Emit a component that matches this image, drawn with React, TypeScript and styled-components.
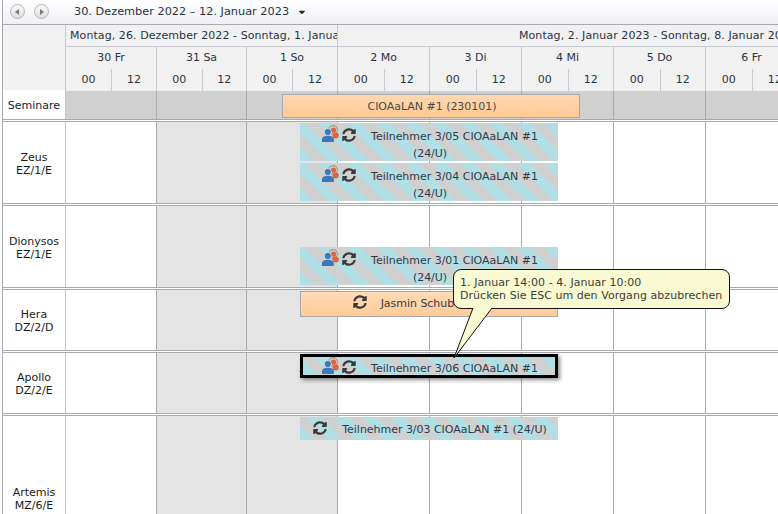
import React from "react";
import styled, { createGlobalStyle, css } from "styled-components";
import { FaSyncAlt, FaCaretDown } from "react-icons/fa";

const Global = createGlobalStyle`
  html, body { margin: 0; padding: 0; background: #fff; overflow: hidden; height: 514px; }
  #root { height: 514px; overflow: hidden; }
  * { box-sizing: border-box; }
`;

const DAY_WIDTHS = [91, 90, 91, 92, 92, 92, 92, 92, 92, 92];
const TRACKS = DAY_WIDTHS.map((w) => `${w}px`).join(" ");
const FONT = `"DejaVu Sans", Verdana, sans-serif`;
const LINE = "#a9a9b1";
const HEAD_LINE = "#c9c9d1";

const Page = styled.div`
  position: relative;
  width: 1100px;
  height: 514px;
  margin-left: 2px;
  border-left: 1px solid ${LINE};
  font: 11px/14px ${FONT};
  color: #2a3340;
`;
const Toolbar = styled.div`
  display: flex;
  align-items: center;
  height: 25px;
  width: 775px;
  padding: 0 0 1px 7px;
  background: linear-gradient(#ffffff, #eef0f5);
  border-bottom: 1px solid ${LINE};
`;
const NavButton = styled.button<{ $flip?: boolean }>`
  display: flex;
  align-items: center;
  justify-content: center;
  width: 15px;
  height: 15px;
  padding: 0;
  margin-right: 9px;
  border: 1px solid #b4b4b4;
  border-radius: 50%;
  background: linear-gradient(#fbfbfb, #dedede);
  &::before {
    content: "";
    width: 0;
    height: 0;
    border-top: 3px solid transparent;
    border-bottom: 3px solid transparent;
    ${(p) => (p.$flip ? "border-left: 4px solid #777; margin-left: 1px;" : "border-right: 4px solid #777; margin-right: 1px;")}
  }
`;
const RangeButton = styled.div`
  display: flex;
  align-items: center;
  margin-left: 16px;
  font-size: 11.3px;
  color: #2a3340;
  svg { margin-left: 8px; font-size: 10px; color: #222; }
`;
const Row = styled.div<{ $h: number }>`
  display: flex;
  height: ${(p) => p.$h}px;
`;
const Corner = styled.div`
  width: 62px;
  height: 65px;
  flex: none;
  background: #f1f1f1;
`;
const HeaderStack = styled.div`
  display: flex;
  flex-direction: column;
`;
const HeaderGrid = styled.div`
  display: grid;
  grid-template-columns: ${TRACKS};
  height: 22px;
  background: #f1f1f1;
`;
const WeekCell = styled.div<{ $span: number; $pr: number }>`
  grid-column: span ${(p) => p.$span};
  padding: 0 ${(p) => p.$pr}px 0 4px;
  border-left: 1px solid ${HEAD_LINE};
  border-bottom: 1px solid ${HEAD_LINE};
  line-height: 21px;
  letter-spacing: 0.08px;
  white-space: nowrap;
  overflow: hidden;
  display: flex;
  justify-content: safe center;
`;
const DayCell = styled.div`
  border-left: 1px solid ${HEAD_LINE};
  border-bottom: 1px solid ${HEAD_LINE};
  line-height: 22px;
  text-align: center;
`;
const HourPair = styled.div`
  display: grid;
  grid-template-columns: 1fr 1fr;
  border-left: 1px solid ${HEAD_LINE};
`;
const HourCell = styled.div`
  line-height: 22px;
  text-align: center;
  & + & { border-left: 1px solid ${HEAD_LINE}; }
`;
const Resource = styled.div<{ $h: number }>`
  display: flex;
  height: ${(p) => p.$h}px;
  border-bottom: 3px double ${LINE};
`;
const Label = styled.div<{ $pt?: number }>`
  flex: none;
  width: 62px;
  padding-top: ${(p) => p.$pt ?? 2}px;
  display: flex;
  align-items: center;
  justify-content: center;
  text-align: center;
  line-height: 13px;
  color: #1a1a22;
  background: #fff;
`;
const Lane = styled.div`
  position: relative;
  display: grid;
  grid-template-columns: ${TRACKS};
`;
const LaneCell = styled.div<{ $bg: string; $first?: boolean }>`
  background: ${(p) => p.$bg};
  border-left: 1px solid ${(p) => (p.$first ? "#c6c6c6" : "#ababab")};
`;
const stripes = css`
  background: repeating-linear-gradient(45deg, #b0e0e6 0 10px, #d0d0d0 10px 20px);
`;
const Event = styled.div<{ $x: number; $y: number; $h: number; $pt: number; $kind: "stripe" | "orange" | "selected" | "seminar"; $w?: number }>`
  position: absolute;
  left: ${(p) => p.$x}px;
  top: ${(p) => p.$y}px;
  width: ${(p) => p.$w ?? 258}px;
  height: ${(p) => p.$h}px;
  text-align: center;
  line-height: 17px;
  letter-spacing: -0.03px;
  color: #333a46;
  padding: ${(p) => p.$pt}px 7px 0 9px;
  ${(p) => (p.$kind === "stripe" || p.$kind === "selected") && stripes}
  ${(p) => p.$kind === "selected" && css`
    border: 3px solid #000;
    line-height: 13px;
    padding-left: 6px;
    padding-right: 4px;
    box-shadow: 2px 2px 4px rgba(0,0,0,.45);
  `}
  ${(p) => (p.$kind === "orange" || p.$kind === "seminar") && css`
    background: linear-gradient(#ffdcb8, #ffca96);
    border: 1px solid #a6a6ae;
  `}
  ${(p) => p.$kind === "seminar" && css`
    background: linear-gradient(#ffd9b3, #ffc992);
    color: #4a4a4a;
  `}
`;
const IconSlot = styled.span<{ $mr: number }>`
  display: inline-flex;
  vertical-align: -2px;
  margin-right: ${(p) => p.$mr}px;
`;
const SyncIcon = styled(FaSyncAlt)`
  width: 14px;
  height: 14px;
  color: #3a3a3a;
`;
const Tooltip = styled.div`
  position: absolute;
  left: 450px;
  top: 269px;
  width: 277px;
  height: 40px;
  padding: 6px 0 0 6px;
  background: #f9f9d2;
  border: 1px solid #111;
  border-radius: 8px;
  line-height: 13px;
  letter-spacing: 0.05px;
  color: #3c4038;
  white-space: nowrap;
  z-index: 3;
`;
const TooltipTail = styled.svg`
  position: absolute;
  left: 449px;
  top: 307px;
  z-index: 4;
`;

const PeopleIcon = () => (
  <svg width="17" height="17" viewBox="0 0 17 17">
    <circle cx="11" cy="5" r="4.4" fill="none" stroke="#e6805f" strokeWidth="1.1" />
    <circle cx="11.5" cy="5.2" r="2.6" fill="#e2623c" />
    <ellipse cx="13.6" cy="10.6" rx="3.2" ry="3" fill="#e2623c" />
    <circle cx="5.8" cy="7" r="3.6" fill="#3b78b8" stroke="#fff" strokeWidth=".6" />
    <path d="M0 17v-2.6C0 12 2.5 10.8 5.8 10.8s6 1.2 6 3.6V17z" fill="#3b78b8" />
  </svg>
);

const Sync = ({ mr }: { mr: number }) => (
  <IconSlot $mr={mr}><SyncIcon /></IconSlot>
);

const People = () => (
  <IconSlot $mr={3}><PeopleIcon /></IconSlot>
);

const DAYS = ["30 Fr", "31 Sa", "1 So", "2 Mo", "3 Di", "4 Mi", "5 Do", "6 Fr", "7 Sa", "8 So"];
const WEEKEND_IDX = [1, 2, 8, 9];

const Cells = ({ seminar }: { seminar?: boolean }) => (
  <>
    {DAY_WIDTHS.map((_, i) => (
      <LaneCell
        key={i}
        $first={i === 0}
        $bg={seminar ? "#d0d0d0" : WEEKEND_IDX.includes(i) ? "#e4e4e4" : "#fff"}
      />
    ))}
  </>
);

const X = 235;

export default function App() {
  return (
    <>
      <Global />
      <Page>
        <Toolbar>
          <NavButton aria-label="Zurück" />
          <NavButton aria-label="Weiter" $flip />
          <RangeButton>
            30. Dezember 2022 – 12. Januar 2023
            <FaCaretDown />
          </RangeButton>
        </Toolbar>

        <Row $h={66}>
          <Corner />
          <HeaderStack>
            <HeaderGrid>
              <WeekCell $span={3} $pr={3}>Montag, 26. Dezember 2022 - Sonntag, 1. Januar 2023</WeekCell>
              <WeekCell $span={7} $pr={8}>Montag, 2. Januar 2023 - Sonntag, 8. Januar 2023</WeekCell>
            </HeaderGrid>
            <HeaderGrid>
              {DAYS.map((d) => <DayCell key={d}>{d}</DayCell>)}
            </HeaderGrid>
            <HeaderGrid>
              {DAYS.map((d) => (
                <HourPair key={d}>
                  <HourCell>00</HourCell>
                  <HourCell>12</HourCell>
                </HourPair>
              ))}
            </HeaderGrid>
          </HeaderStack>
        </Row>

        <Resource $h={31}>
          <Label $pt={1}>Seminare</Label>
          <Lane>
            <Cells seminar />
            <Event $kind="seminar" $x={217} $y={3} $h={24} $w={298} $pt={3}>CIOAaLAN #1 (230101)</Event>
          </Lane>
        </Resource>

        <Resource $h={84}>
          <Label>Zeus<br />EZ/1/E</Label>
          <Lane>
            <Cells />
            <Event $kind="stripe" $x={X} $y={1} $h={38} $pt={2}>
              <People /><Sync mr={15} />Teilnehmer 3/05 CIOAaLAN #1 (24/U)
            </Event>
            <Event $kind="stripe" $x={X} $y={41} $h={38} $pt={2}>
              <People /><Sync mr={15} />Teilnehmer 3/04 CIOAaLAN #1 (24/U)
            </Event>
          </Lane>
        </Resource>

        <Resource $h={84}>
          <Label>Dionysos<br />EZ/1/E</Label>
          <Lane>
            <Cells />
            <Event $kind="stripe" $x={X} $y={41} $h={38} $pt={2}>
              <People /><Sync mr={15} />Teilnehmer 3/01 CIOAaLAN #1 (24/U)
            </Event>
          </Lane>
        </Resource>

        <Resource $h={63}>
          <Label>Hera<br />DZ/2/D</Label>
          <Lane>
            <Cells />
            <Event $kind="orange" $x={X} $y={1} $h={26} $pt={3}>
              <Sync mr={14} />Jasmin Schubert (24/U)
            </Event>
          </Lane>
        </Resource>

        <Resource $h={63}>
          <Label>Apollo<br />DZ/2/E</Label>
          <Lane>
            <Cells />
            <Event $kind="selected" $x={X} $y={1} $h={24} $pt={0}>
              <People /><Sync mr={15} />Teilnehmer 3/06 CIOAaLAN #1
            </Event>
          </Lane>
        </Resource>

        <Resource $h={166}>
          <Label>Artemis<br />MZ/6/E</Label>
          <Lane>
            <Cells />
            <Event $kind="stripe" $x={X} $y={1} $h={23} $pt={4}>
              <Sync mr={15} />Teilnehmer 3/03 CIOAaLAN #1 (24/U)
            </Event>
          </Lane>
        </Resource>

        <Tooltip>
          1. Januar 14:00 - 4. Januar 10:00<br />
          Drücken Sie ESC um den Vorgang abzubrechen
        </Tooltip>
        <TooltipTail width="44" height="54" viewBox="0 0 44 54">
          <path d="M21 1 L2 51 L40 1" fill="#f9f9d2" stroke="#111" strokeWidth="1" />
          <path d="M21.5 0 L39 0 L30 2 Z" fill="#f9f9d2" />
        </TooltipTail>
      </Page>
    </>
  );
}
